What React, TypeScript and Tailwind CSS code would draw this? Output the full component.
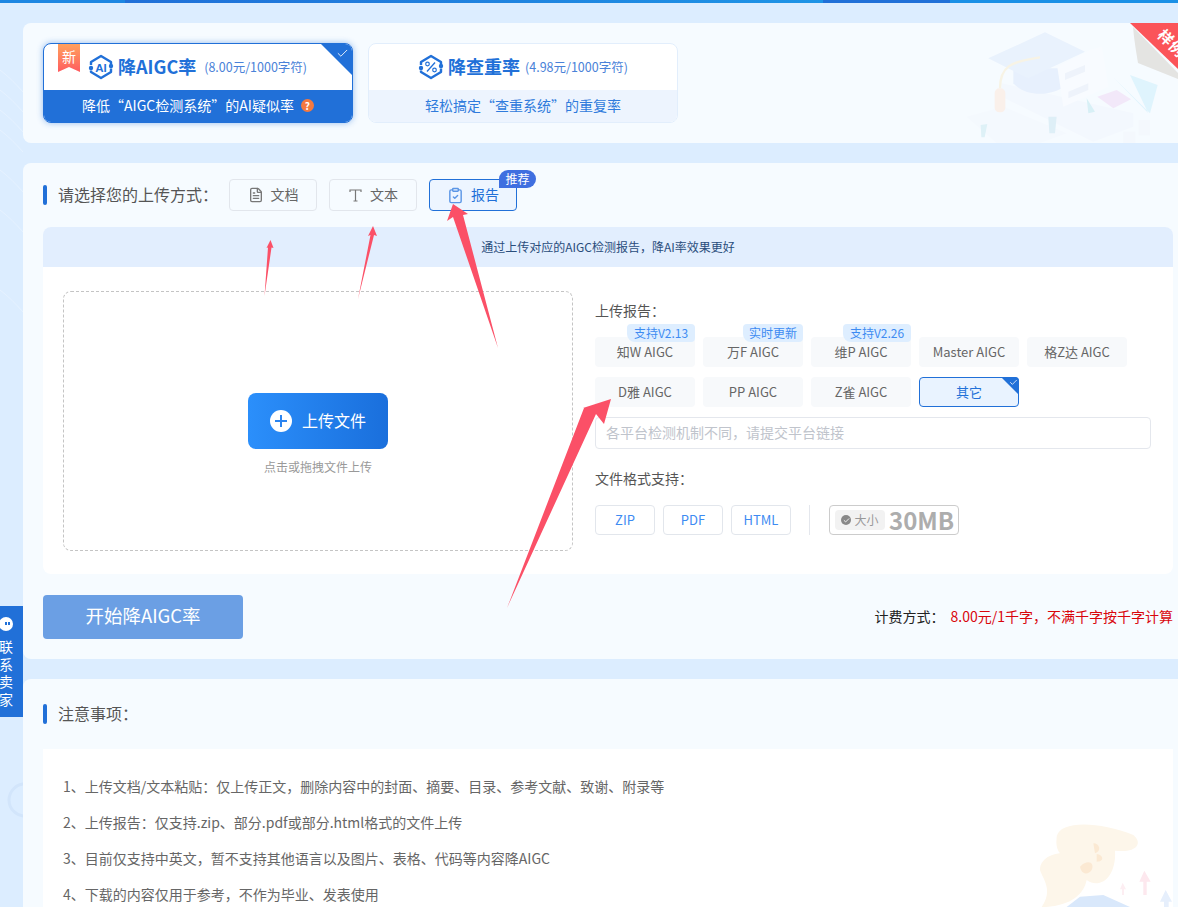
import React from "react";
import { FileText, ClipboardCheck, Check } from "lucide-react";

function HexIcon({ kind }: { kind: "ai" | "pct" }) {
  return (
    <svg width="26" height="26" viewBox="0 0 26 26" fill="none" className="shrink-0">
      <path d="M3 11V8 L13 2 23 8V10M23 14.500V18 L13 24 3 18V16.500" stroke="#2170d8" strokeWidth="2.400" strokeLinejoin="round" />
      <circle cx="3" cy="14" r="2.200" fill="#2170d8" />
      <circle cx="23" cy="12" r="2.200" fill="#2170d8" />
      {kind === "ai" ? (
        <text x="13" y="17.500" textAnchor="middle" fontSize="11.500" fontWeight="700" fill="#2170d8" fontFamily="Liberation Sans, sans-serif">AI</text>
      ) : (
        <>
          <path d="M9 17.500 17 8.500" stroke="#2170d8" strokeWidth="1.300" />
          <circle cx="9.500" cy="10" r="1.800" stroke="#2170d8" strokeWidth="1.200" />
          <circle cx="16.500" cy="16" r="1.800" stroke="#2170d8" strokeWidth="1.200" />
        </>
      )}
    </svg>
  );
}

function Title({ children }: { children: React.ReactNode }) {
  return (
    <div className="flex items-center gap-[11px]">
      <span className="w-1 h-5 rounded-sm bg-[#2170d8]" />
      <span className="text-[16px] text-[#555] leading-5 pb-[2px]">{children}</span>
    </div>
  );
}

function UploadTab({ children, icon, active }: { children: React.ReactNode; icon: React.ReactNode; active?: boolean }) {
  return (
    <div className={`relative w-[88px] h-8 rounded border flex items-center justify-center gap-[7px] text-sm ${active ? "border-[#2170d8] bg-[#edf5ff] text-[#2170d8]" : "border-[#e2e6ec] text-[#666]"}`}>
      {icon}
      <span className="pb-[2px]">{children}</span>
      {active && (
        <span className="absolute right-[-20px] top-[-10px] w-[37px] h-[18px] rounded-full rounded-bl-none bg-[#3f6fe0] text-white text-[12px] leading-[18px] text-center">推荐</span>
      )}
    </div>
  );
}

function Chip({ name, badge, badgeW, active }: { name: string; badge?: string; badgeW?: string; active?: boolean }) {
  return (
    <div className={`relative h-[30px] rounded flex items-center justify-center text-[13px] ${active ? "border border-[#2170d8] bg-[#e9f3ff] text-[#2170d8]" : "bg-[#f7f9fb] text-[#666]"}`}>
      {name}
      {badge && (
        <span className={`absolute right-0 top-[-13px] h-[18px] rounded rounded-bl-lg bg-[#deeeff] text-[#3d8bf2] text-[12px] leading-[18px] text-center ${badgeW}`}>{badge}</span>
      )}
      {active && (
        <>
          <span className="absolute right-[-1px] top-[-1px] w-[18px] h-[18px] bg-[#2170d8] rounded-tr [clip-path:polygon(0_0,100%_0,100%_100%)]" />
          <Check className="absolute right-[0px] top-0 text-white" size={9} strokeWidth={2} />
        </>
      )}
    </div>
  );
}

function Fmt({ children }: { children: React.ReactNode }) {
  return (
    <div className="w-[60px] h-[30px] rounded border border-[#e2e6ec] flex items-center justify-center text-[13px] text-[#3d8bf2]">{children}</div>
  );
}

export default function App() {
  return (
    <div className="relative w-[1178px] h-[907px] overflow-hidden bg-[#dcedff] font-['Noto_Sans_CJK_SC','Noto_Sans',sans-serif]">
      {/* background decoration */}
      <svg className="absolute left-0 top-0" width="23" height="907" fill="none">
        <path d="M0 70C8 76 16 84 23 92M0 90C8 96 16 104 23 112M0 110C8 116 16 124 23 132M0 130C8 136 16 144 23 152M0 170C8 176 16 184 23 192M0 210C8 216 16 224 23 232M0 290C8 296 16 304 23 312" stroke="#e6f2ff" />
        <circle cx="25" cy="800" r="16" stroke="#d2e5fb" strokeWidth="3" />
      </svg>

      {/* top bar */}
      <div className="relative flex h-[3px]">
        <div className="w-[125px] bg-[#1c86e2]" />
        <div className="w-[698px] bg-linear-to-r from-[#2170d8] to-[#1e94e6]" />
        <div className="w-[127px] bg-[#2170d8]" />
        <div className="flex-1 bg-[#1a90e6]" />
      </div>

      <div className="relative pl-[23px] pt-5 flex flex-col gap-5">
        {/* service selection */}
        <section className="relative h-[120px] rounded-l-lg bg-[#f6fbff] p-5 flex gap-[15px] overflow-hidden">
          <svg className="absolute right-0 top-0 opacity-50" width="278" height="120" viewBox="0 69 834 360" fill="none">
            <path d="M305 250 L700 340 L700 380 L580 425 L305 290Z" fill="#f0f5fd" />
            <path d="M200 350 L310 320 L500 400 L420 429 L290 429Z" fill="#f2f7fe" />
            <path d="M340 205 V250 C380 295 470 290 510 245 V205Z" fill="#d8e6fb" />
            <path d="M265 175 435 97 555 155 385 235Z" fill="#dbe9fb" />
            <path d="M300 265C300 200 330 185 420 172" stroke="#f8eccb" strokeWidth="7" />
            <rect x="284" y="265" width="32" height="72" rx="14" fill="#fde5d6" />
            <path d="M472 200 570 150 605 140 625 260 490 320Z" fill="#fafcff" />
            <path d="M495 220 555 195V215L495 240ZM505 275 565 250V270L505 295Z" fill="#e6ecf7" />
            <path d="M592 290 650 270 693 298 640 325Z" fill="#eed6f3" />
            <path d="M640 232 750 340 773 255 690 225 745 340Z" fill="#c7eefb" />
            <path d="M560 295 585 335 565 340Z" fill="#b9e6ee" />
            <path d="M445 350 470 350 465 400 448 400Z" fill="#c6e4f0" />
            <path d="M242 375 262 372 254 412 244 412Z" fill="#c6e8f0" />
            <rect x="670" y="395" width="36" height="34" fill="#f1f5fb" />
            <rect x="716" y="360" width="34" height="46" fill="#f1f5fb" />
          </svg>

          <div className="relative w-[310px] h-20 rounded-lg border border-[#2170d8] shadow-[0_0_6px_rgba(33,112,216,0.45)] overflow-hidden flex flex-col bg-white">
            <div className="h-[46px] flex items-center pl-[44px] gap-[4px] text-[#2170d8]">
              <HexIcon kind="ai" />
              <span className="text-[18px] font-bold pb-[1px]">降AIGC率</span>
              <span className="text-[12.500px] ml-[4px] text-[#4a82d8]">(8.00元/1000字符)</span>
            </div>
            <div className="flex-1 bg-[#2170d8] text-white text-[14px] flex items-center justify-center gap-[7px] pb-[2px]">
              降低“AIGC检测系统”的AI疑似率
              <span className="w-[13px] h-[13px] rounded-full bg-[#f5793f] text-white text-[10px] font-bold leading-[13px] text-center">?</span>
            </div>
            <span className="absolute left-[14px] top-0 w-[22px] h-[28px] pt-[2px] bg-linear-to-b from-[#ffa05c] to-[#ff5a5f] text-white text-[14px] leading-[20px] text-center [clip-path:polygon(0_0,100%_0,100%_100%,50%_82%,0_100%)]">新</span>
            <span className="absolute right-0 top-0 w-[31px] h-[31px] bg-[#2170d8] [clip-path:polygon(0_0,100%_0,100%_100%)]" />
            <Check className="absolute right-[3px] top-[3px] text-white" size={13} strokeWidth={1.600} />
          </div>

          <div className="relative w-[310px] h-20 rounded-lg border border-[#e2eefc] overflow-hidden flex flex-col bg-white">
            <div className="h-[46px] flex items-center pl-[49px] gap-[4px] text-[#2170d8]">
              <HexIcon kind="pct" />
              <span className="text-[18px] font-bold pb-[1px]">降查重率</span>
              <span className="text-[12.500px] ml-[1px] text-[#4a82d8]">(4.98元/1000字符)</span>
            </div>
            <div className="flex-1 bg-[#edf4fe] text-[#2f7bdc] text-[14px] flex items-center justify-center pb-[2px]">轻松搞定“查重系统”的重复率</div>
          </div>

          <svg className="absolute right-0 top-0" width="48" height="56" viewBox="0 0 48 56">
            <path d="M3 4 48 50V56L8 40C6 28 4 16 3 4Z" fill="#e4e4e2" />
            <path d="M0 0H48V46Z" fill="#fb5459" />
          </svg>
          <span className="absolute right-[-14px] top-[10px] w-[40px] rotate-45 text-white text-[15px] font-bold tracking-[1px] leading-5 text-center whitespace-nowrap">样例</span>
        </section>

        {/* upload section */}
        <section className="h-[496px] rounded-l-lg bg-[#f6fbff] pl-5 pr-[5px] pt-4">
          <div className="flex items-center">
            <div className="w-[186px]"><Title>请选择您的上传方式：</Title></div>
            <div className="flex gap-3">
              <UploadTab icon={<FileText size={16} className="text-[#777]" />}>文档</UploadTab>
              <UploadTab icon={
                <svg width="15" height="15" viewBox="0 0 15 15" fill="none" stroke="#777" strokeWidth="1.200"><path d="M2 4V2h11v2M7.500 2v11M5.500 13h4" /></svg>
              }>文本</UploadTab>
              <UploadTab active icon={<ClipboardCheck size={17} className="text-[#5b96e6]" />}>报告</UploadTab>
            </div>
          </div>

          <div className="mt-4 h-[347px] rounded-lg bg-white overflow-hidden">
            <div className="h-10 bg-[#e2eefe] flex items-center justify-center text-[12px] text-[#2a4d7c]">通过上传对应的AIGC检测报告，降AI率效果更好</div>
            <div className="flex pl-5 pr-[22px] pt-6">
              <div className="w-[510px] h-[260px] rounded-lg border border-dashed border-[#c4c4c4] flex flex-col items-center pt-[101px]">
                <div className="w-[140px] h-14 rounded-lg bg-linear-to-r from-[#2b8ffb] to-[#1a6fdc] flex items-center justify-center gap-[10px] text-white text-[16px]">
                  <span className="relative w-[22px] h-[22px] rounded-full bg-white">
                    <span className="absolute left-[5px] top-[10px] w-3 h-[2px] bg-[#2a84f0]" />
                    <span className="absolute left-[10px] top-[5px] w-[2px] h-3 bg-[#2a84f0]" />
                  </span>
                  <span className="pb-[2px]">上传文件</span>
                </div>
                <div className="mt-[9px] text-[12px] text-[#999] leading-[18px]">点击或拖拽文件上传</div>
              </div>

              <div className="ml-[22px] w-[556px]">
                <div className="text-[14px] text-[#555] leading-5 mt-[9px]">上传报告：</div>
                <div className="grid grid-cols-[repeat(5,100px)] gap-x-2 gap-y-[10px] mt-[17px]">
                  <Chip name="知W AIGC" badge="支持V2.13" badgeW="w-[68px]" />
                  <Chip name="万F AIGC" badge="实时更新" badgeW="w-[60px]" />
                  <Chip name="维P AIGC" badge="支持V2.26" badgeW="w-[68px]" />
                  <Chip name="Master AIGC" />
                  <Chip name="格Z达 AIGC" />
                  <Chip name="D雅 AIGC" />
                  <Chip name="PP AIGC" />
                  <Chip name="Z雀 AIGC" />
                  <Chip name="其它" active />
                </div>
                <div className="mt-[10px] h-8 rounded border border-[#e4e7ed] flex items-center pl-[10px] pb-[2px] text-[14px] text-[#c0c4cc] bg-white">各平台检测机制不同，请提交平台链接</div>
                <div className="text-[14px] text-[#555] leading-5 mt-[19px]">文件格式支持：</div>
                <div className="flex items-center gap-2 mt-[17px]">
                  <Fmt>ZIP</Fmt>
                  <Fmt>PDF</Fmt>
                  <Fmt>HTML</Fmt>
                  <span className="w-px h-[30px] bg-[#e4e7ed] ml-[10px] mr-[11px]" />
                  <div className="w-[130px] h-[30px] rounded border border-[#ccc] flex items-center pl-[5px] gap-[4px]">
                    <span className="h-5 w-[50px] rounded bg-[#f2f2f2] flex items-center justify-center gap-[3px] text-[12px] text-[#999]">
                      <span className="w-[10px] h-[10px] rounded-full bg-[#888] flex items-center justify-center"><Check size={7} strokeWidth={3} className="text-white" /></span>
                      大小
                    </span>
                    <span className="text-[24px] leading-[28px] font-bold text-[#adadad]">30MB</span>
                  </div>
                </div>
              </div>
            </div>
          </div>

          <div className="mt-[21px] flex items-center justify-between">
            <div className="w-[200px] h-11 rounded bg-[#6b9fe4] text-white text-[18.500px] flex items-center justify-center pb-[2px]">开始降AIGC率</div>
            <div className="text-[14px] text-[#222] pb-[2px]">计费方式：<span className="ml-[6px] text-[#d9060c]">8.00元/1千字，不满千字按千字计算</span></div>
          </div>
        </section>

        {/* notes */}
        <section className="h-[400px] rounded-l-lg bg-[#f6fbff] pl-5 pr-[5px] pt-[24px]">
          <Title>注意事项：</Title>
          <div className="relative mt-[24px] h-[300px] bg-white overflow-hidden pl-5 pt-[28px] text-[14px] text-[#666] flex flex-col gap-[18px] leading-[18px]">
            <svg className="absolute right-0 top-[31px]" width="213" height="127" viewBox="0 0 639 381" fill="none">
              <path d="M290 170C300 120 420 125 520 165 550 190 530 220 465 212 470 290 420 330 380 300 370 350 320 381 245 381 280 330 250 300 240 270 240 230 290 220 300 220 285 200 290 180 290 170Z" fill="#fdf6ea" />
              <path d="M400 190C420 190 425 215 405 220ZM410 222C430 225 435 245 410 245ZM360 260C385 235 405 250 395 270 385 285 365 285 360 260Z" fill="#fbe9d3" />
              <path d="M320 381 360 350 430 345 510 381Z" fill="#d9e8fb" />
              <path d="M553 272 572 305 560 305V345H550V305H538Z" fill="#fde8ee" />
              <path d="M488 308 498 328H492V345H486V328H480Z" fill="#fdeef2" />
              <path d="M617 330 636 365H626V381H612V365H600Z" fill="#e6effc" />
            </svg>
            <div className="relative">1、上传文档/文本粘贴：仅上传正文，删除内容中的封面、摘要、目录、参考文献、致谢、附录等</div>
            <div className="relative">2、上传报告：仅支持.zip、部分.pdf或部分.html格式的文件上传</div>
            <div className="relative">3、目前仅支持中英文，暂不支持其他语言以及图片、表格、代码等内容降AIGC</div>
            <div className="relative">4、下载的内容仅用于参考，不作为毕业、发表使用</div>
          </div>
        </section>
      </div>

      {/* contact seller float */}
      <div className="absolute left-0 top-[606px] w-[23px] h-[111px] bg-[#2170d8] overflow-hidden text-white text-[14px] leading-[17.500px]">
        <span className="absolute left-[-1px] top-[11px] w-[14px] h-[14px] rounded-full bg-white">
          <span className="absolute left-[6px] top-[5px] w-[2px] h-[3px] bg-[#2170d8]" />
          <span className="absolute left-[9px] top-[5px] w-[2px] h-[3px] bg-[#2170d8]" />
        </span>
        <div className="absolute left-[-1px] top-[32px] w-[14px]">联系卖家</div>
      </div>

      {/* hand-drawn annotation arrows */}
      <svg className="absolute left-0 top-0 pointer-events-none" width="1178" height="907" fill="#fb5067">
        <path d="M270.500 240 273.500 248 271.500 247.500 264.500 296 268 247.500 266.500 248Z" />
        <path d="M373 226 377 236 374 235 358 299 370.500 235 368 236Z" />
        <path d="M453 204 468 214 463 215 498 348 453 217 447 221Z" />
        <path d="M611 399 604 424 596 414 507 608 584 408 583 408 Z" />
      </svg>
    </div>
  );
}
